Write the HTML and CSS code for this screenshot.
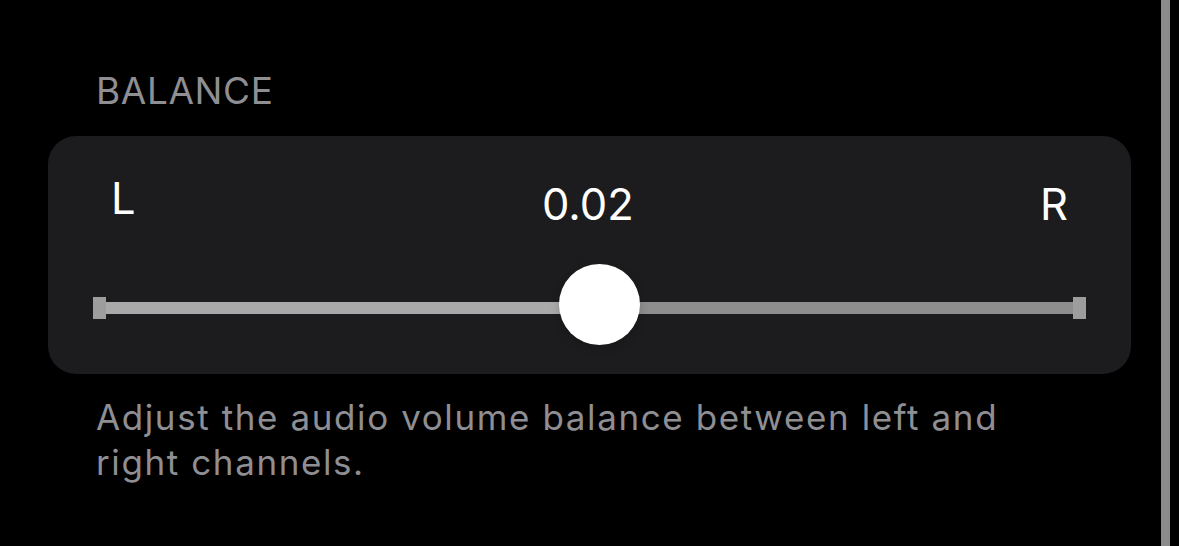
FILE: index.html
```html
<!DOCTYPE html>
<html lang="en">
<head>
<meta charset="utf-8">
<title>Balance</title>
<link rel="stylesheet" href="styles.css">
</head>
<body>
<main class="screen">
  <section class="group">
    <h2 class="group-title">BALANCE</h2>
    <div class="card">
      <div class="scale">
        <span class="end end-left">L</span>
        <span class="value">0.02</span>
        <span class="end end-right">R</span>
      </div>
      <div class="slider">
        <span class="cap"></span>
        <div class="rail">
          <span class="fill fill-left"></span>
          <span class="fill fill-right"></span>
          <span class="thumb" style="left: 51%"></span>
        </div>
        <span class="cap"></span>
      </div>
    </div>
    <p class="group-footer">Adjust the audio volume balance between left and right channels.</p>
  </section>
  <div class="scroll-indicator"></div>
</main>
</body>
</html>
```

FILE: styles.css
```css
* {
  box-sizing: border-box;
}

html,
body {
  margin: 0;
  background: #000;
}

body {
  font-family: "Inter", "Noto Sans", "Liberation Sans", sans-serif;
  color: #fff;
}

.screen {
  position: relative;
  width: 1179px;
  height: 546px;
  overflow: hidden;
  padding: 69px 0 0 48px;
}

.group {
  width: 1083px;
  display: flex;
  flex-direction: column;
}

.group-title {
  margin: 0 0 23px;
  padding-left: 48px;
  font-size: 37px;
  line-height: 44px;
  font-weight: 400;
  letter-spacing: 0.6px;
  color: #8e8e93;
}

.card {
  background: #1c1c1e;
  border-radius: 28px;
  padding: 42px 45px 28px;
  display: flex;
  flex-direction: column;
  gap: 34px;
}

.scale {
  display: flex;
  justify-content: space-between;
  align-items: flex-start;
  padding: 0 18px 0 18px;
  font-size: 43.5px;
  line-height: 52px;
}

.end-left {
  margin-top: -6px;
}

.slider {
  display: flex;
  align-items: center;
  height: 82px;
}

.cap {
  width: 13px;
  height: 22px;
  background: #9d9d9d;
  margin-top: 6px;
  flex: none;
}

.rail {
  position: relative;
  flex: 1;
  height: 12px;
  margin-top: 6px;
  display: flex;
}

.fill-left {
  flex: 51;
  background: #a9a9a9;
}

.fill-right {
  flex: 49;
  background: #8e8e8e;
}

.thumb {
  position: absolute;
  top: 50%;
  width: 81px;
  height: 81px;
  margin: -44px 0 0 -40px;
  border-radius: 50%;
  background: #fff;
  box-shadow: 0 3px 10px rgba(0, 0, 0, 0.18);
}

.group-footer {
  margin: 21px 0 0;
  padding: 0 70px 0 48px;
  font-size: 35px;
  line-height: 45px;
  letter-spacing: 1.6px;
  color: #8e8e93;
}

.scroll-indicator {
  position: absolute;
  top: 0;
  left: 1161px;
  width: 9px;
  height: 100%;
  background: #8b8b8b;
}
```
